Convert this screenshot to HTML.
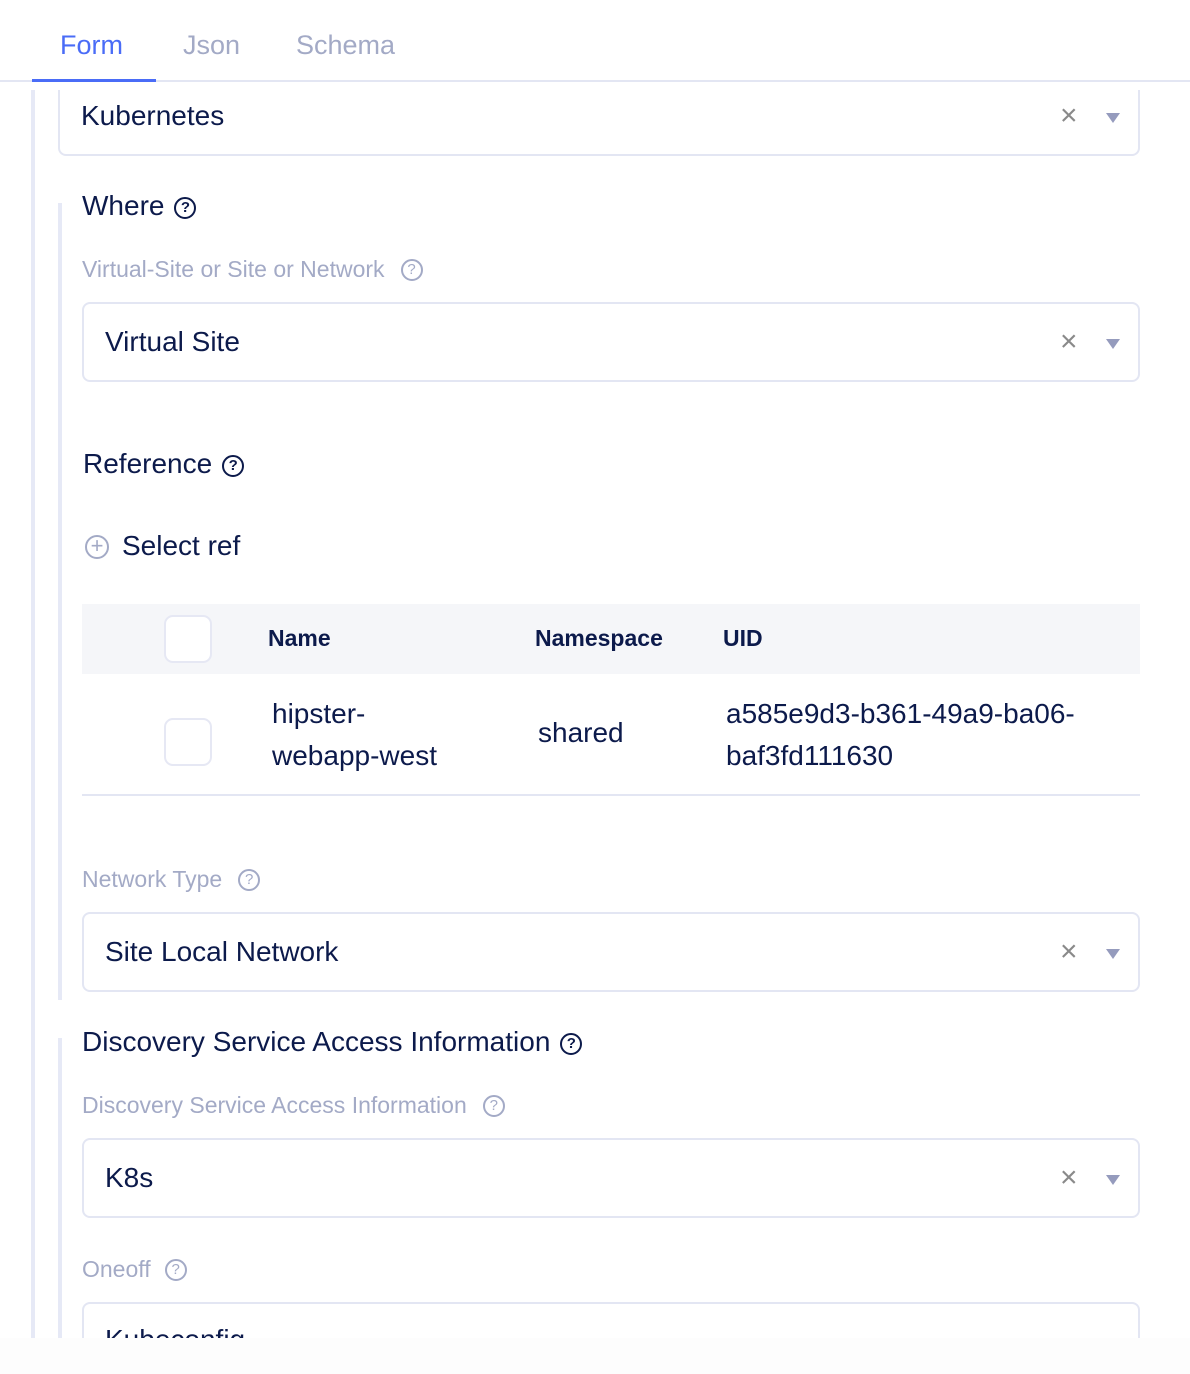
<!DOCTYPE html>
<html><head><style>
*{box-sizing:border-box;margin:0;padding:0}
html,body{width:1190px;height:1374px;overflow:hidden}
body{background:#fff;font-family:"Liberation Sans",sans-serif;color:#0c1a4b;position:relative}
.a{position:absolute}
.tab{position:absolute;top:30px;font-size:27px;color:#a3aac6}
.box{position:absolute;border:2px solid #e3e6f3;border-radius:8px;background:#fff}
.val{position:absolute;font-size:28px;color:#0c1a4b}
.x{position:absolute;font-size:30px;color:#8a8a8a;line-height:1}
.tri{position:absolute;width:0;height:0;border-left:7px solid transparent;border-right:7px solid transparent;border-top:10px solid #959bbd}
.lbl{position:absolute;font-size:23px;color:#a3aac6}
.h{position:absolute;font-size:28px;color:#0c1a4b}
.q{display:inline-block;width:22px;height:22px;border:2px solid currentColor;border-radius:50%;font-size:15px;text-align:center;line-height:18px;vertical-align:3px;margin-left:10px;font-weight:bold}
.vl{position:absolute;width:4px;background:#e6e9f6}
.cb{position:absolute;width:48px;height:48px;border:2px solid #e6e8f4;border-radius:9px;background:#fff}
</style></head><body>
<div class="tab" style="left:60px;color:#4a6cf7">Form</div>
<div class="tab" style="left:183px">Json</div>
<div class="tab" style="left:296px">Schema</div>
<div class="a" style="left:0;top:80px;width:1190px;height:2px;background:#e3e6f3"></div>
<div class="a" style="left:32px;top:79px;width:124px;height:3px;background:#4a6cf7"></div>

<div class="vl" style="left:31px;top:90px;height:1248px"></div>
<div class="vl" style="left:58px;top:203px;height:797px"></div>
<div class="vl" style="left:58px;top:1038px;height:300px"></div>

<div class="box" style="left:58px;top:90px;width:1082px;height:66px;border-top:none;border-radius:0 0 8px 8px"></div>
<div class="val" style="left:81px;top:100px">Kubernetes</div>
<div class="x" style="left:1060px;top:101px">×</div><div class="tri" style="left:1106px;top:113px"></div>

<div class="h" style="left:82px;top:190px">Where<span class="q">?</span></div>
<div class="lbl" style="left:82px;top:256px">Virtual-Site or Site or Network<span class="q" style="margin-left:16px;font-weight:normal">?</span></div>
<div class="box" style="left:82px;top:302px;width:1058px;height:80px"></div>
<div class="val" style="left:105px;top:326px">Virtual Site</div>
<div class="x" style="left:1060px;top:327px">×</div><div class="tri" style="left:1106px;top:339px"></div>

<div class="h" style="left:83px;top:448px">Reference<span class="q">?</span></div>
<div class="a" style="left:85px;top:535px;width:24px;height:24px;border:2px solid #a3aac6;border-radius:50%;color:#a3aac6;font-size:22px;line-height:18px;text-align:center">+</div>
<div class="h" style="left:122px;top:530px">Select ref</div>

<div class="a" style="left:82px;top:604px;width:1058px;height:70px;background:#f5f6f9"></div>
<div class="cb" style="left:164px;top:615px"></div>
<div class="a" style="left:268px;top:625px;font-size:23px;font-weight:bold">Name</div>
<div class="a" style="left:535px;top:625px;font-size:23px;font-weight:bold">Namespace</div>
<div class="a" style="left:723px;top:625px;font-size:23px;font-weight:bold">UID</div>
<div class="cb" style="left:164px;top:718px"></div>
<div class="a" style="left:272px;top:693px;font-size:28px;line-height:42px">hipster-<br>webapp-west</div>
<div class="a" style="left:538px;top:717px;font-size:28px">shared</div>
<div class="a" style="left:726px;top:693px;font-size:28px;line-height:42px">a585e9d3-b361-49a9-ba06-<br>baf3fd111630</div>
<div class="a" style="left:82px;top:794px;width:1058px;height:2px;background:#e3e6f3"></div>

<div class="lbl" style="left:82px;top:866px">Network Type<span class="q" style="margin-left:16px;font-weight:normal">?</span></div>
<div class="box" style="left:82px;top:912px;width:1058px;height:80px"></div>
<div class="val" style="left:105px;top:936px">Site Local Network</div>
<div class="x" style="left:1060px;top:937px">×</div><div class="tri" style="left:1106px;top:949px"></div>

<div class="h" style="left:82px;top:1026px">Discovery Service Access Information<span class="q">?</span></div>
<div class="lbl" style="left:82px;top:1092px">Discovery Service Access Information<span class="q" style="margin-left:16px;font-weight:normal">?</span></div>
<div class="box" style="left:82px;top:1138px;width:1058px;height:80px"></div>
<div class="val" style="left:105px;top:1162px">K8s</div>
<div class="x" style="left:1060px;top:1163px">×</div><div class="tri" style="left:1106px;top:1175px"></div>

<div class="lbl" style="left:82px;top:1256px">Oneoff<span class="q" style="margin-left:14px;font-weight:normal">?</span></div>
<div class="box" style="left:82px;top:1302px;width:1058px;height:50px;border-bottom:none;border-radius:8px 8px 0 0"></div>
<div class="val" style="left:105px;top:1324px">Kubeconfig</div>
<div class="a" style="left:0;top:1338px;width:1190px;height:36px;background:#fdfdfd;z-index:5"></div>
</body></html>
